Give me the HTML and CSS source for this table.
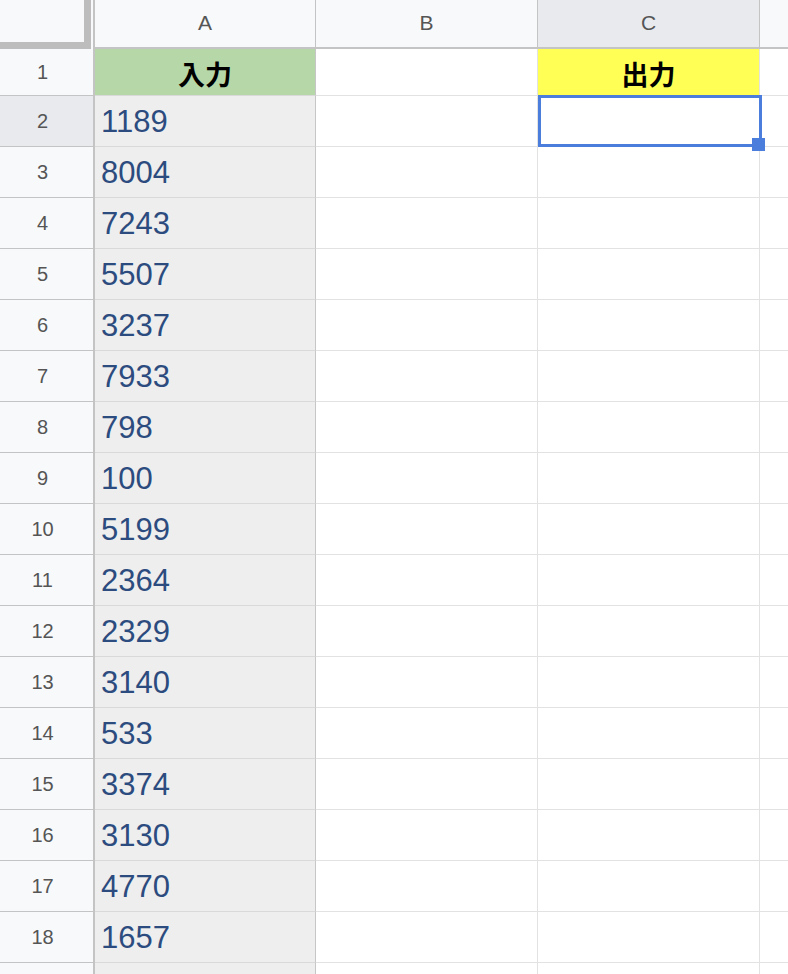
FILE: index.html
```html
<!DOCTYPE html>
<html lang="ja">
<head>
<meta charset="utf-8">
<link rel="stylesheet" href="styles.css">
</head>
<body>
<div class="sheet">
  <div class="corner"><div class="corner-bars"></div></div>
  <div class="colhead">A</div>
  <div class="colhead">B</div>
  <div class="colhead sel">C</div>
  <div class="colhead last"></div>

  <div class="rowhead r1">1</div>
  <div class="cell a r1 hdr-green">入力</div>
  <div class="cell r1"></div>
  <div class="cell r1 hdr-yellow">出力</div>
  <div class="cell r1 last"></div>

  <div class="rowhead sel">2</div>
  <div class="cell a num">1189</div>
  <div class="cell"></div>
  <div class="cell active"><div class="selbox"><div class="handle"></div></div></div>
  <div class="cell last"></div>

  <div class="rowhead">3</div><div class="cell a num">8004</div><div class="cell"></div><div class="cell"></div><div class="cell last"></div>
  <div class="rowhead">4</div><div class="cell a num">7243</div><div class="cell"></div><div class="cell"></div><div class="cell last"></div>
  <div class="rowhead">5</div><div class="cell a num">5507</div><div class="cell"></div><div class="cell"></div><div class="cell last"></div>
  <div class="rowhead">6</div><div class="cell a num">3237</div><div class="cell"></div><div class="cell"></div><div class="cell last"></div>
  <div class="rowhead">7</div><div class="cell a num">7933</div><div class="cell"></div><div class="cell"></div><div class="cell last"></div>
  <div class="rowhead">8</div><div class="cell a num">798</div><div class="cell"></div><div class="cell"></div><div class="cell last"></div>
  <div class="rowhead">9</div><div class="cell a num">100</div><div class="cell"></div><div class="cell"></div><div class="cell last"></div>
  <div class="rowhead">10</div><div class="cell a num">5199</div><div class="cell"></div><div class="cell"></div><div class="cell last"></div>
  <div class="rowhead">11</div><div class="cell a num">2364</div><div class="cell"></div><div class="cell"></div><div class="cell last"></div>
  <div class="rowhead">12</div><div class="cell a num">2329</div><div class="cell"></div><div class="cell"></div><div class="cell last"></div>
  <div class="rowhead">13</div><div class="cell a num">3140</div><div class="cell"></div><div class="cell"></div><div class="cell last"></div>
  <div class="rowhead">14</div><div class="cell a num">533</div><div class="cell"></div><div class="cell"></div><div class="cell last"></div>
  <div class="rowhead">15</div><div class="cell a num">3374</div><div class="cell"></div><div class="cell"></div><div class="cell last"></div>
  <div class="rowhead">16</div><div class="cell a num">3130</div><div class="cell"></div><div class="cell"></div><div class="cell last"></div>
  <div class="rowhead">17</div><div class="cell a num">4770</div><div class="cell"></div><div class="cell"></div><div class="cell last"></div>
  <div class="rowhead">18</div><div class="cell a num">1657</div><div class="cell"></div><div class="cell"></div><div class="cell last"></div>
  <div class="rowhead"></div><div class="cell a num"></div><div class="cell"></div><div class="cell"></div><div class="cell last"></div>
</div>
</body>
</html>
```

FILE: styles.css
```css
html, body {
  margin: 0;
  padding: 0;
  background: #ffffff;
  overflow: hidden;
}

.sheet {
  display: grid;
  grid-template-columns: 95px 221px 222px 222px 1fr;
  grid-template-rows: 49px 47px repeat(18, 51px);
  width: 788px;
  height: 974px;
  overflow: hidden;
  font-family: "Liberation Sans", Arial, sans-serif;
}

.corner {
  box-sizing: border-box;
  background: #f8f9fa;
  padding-right: 2px;
  border-right: 2px solid #c4c4c4;
}

.corner-bars {
  box-sizing: border-box;
  width: 91px;
  height: 49px;
  border-right: 7px solid #bdbdbd;
  border-bottom: 7px solid #bdbdbd;
}

.colhead {
  box-sizing: border-box;
  background: #f8f9fa;
  border-right: 1px solid #c4c4c4;
  border-bottom: 2px solid #c4c4c4;
  color: #555555;
  font-size: 21px;
  display: flex;
  align-items: center;
  justify-content: center;
  padding-bottom: 2px;
}

.colhead.sel {
  background: #e8eaed;
}

.colhead.last {
  border-right: none;
}

.rowhead {
  box-sizing: border-box;
  background: #f8f9fa;
  border-right: 2px solid #c4c4c4;
  border-bottom: 1px solid #c4c4c4;
  color: #555555;
  font-size: 20px;
  display: flex;
  align-items: center;
  justify-content: center;
  padding-right: 8px;
}

.rowhead.sel {
  background: #e8eaed;
}

.cell {
  box-sizing: border-box;
  background: #ffffff;
  border-right: 1px solid #e2e2e2;
  border-bottom: 1px solid #e2e2e2;
  display: flex;
  align-items: center;
}

.cell.last {
  border-right: none;
}

.cell.a {
  background: #eeeeee;
  border-right: 1px solid #c6c6c6;
  border-bottom: 1px solid #d9d9d9;
}

.num {
  color: #2c4b7e;
  font-size: 31px;
  padding-left: 6px;
  padding-top: 2px;
}

.hdr-green,
.hdr-yellow {
  justify-content: center;
  font-family: "Noto Sans CJK JP", "Noto Sans", sans-serif;
  font-weight: 700;
  font-size: 27px;
  color: #000000;
  padding-top: 2px;
}

.cell.hdr-green {
  background: #b6d7a8;
  border-bottom: 1px solid #d9d9d9;
}

.cell.hdr-yellow {
  background: #ffff55;
}

.active {
  position: relative;
}

.selbox {
  position: absolute;
  left: 0;
  top: -1px;
  width: 224px;
  height: 52px;
  box-sizing: border-box;
  border: 3px solid #4a7ddc;
}

.handle {
  position: absolute;
  left: 211px;
  top: 40px;
  width: 13px;
  height: 13px;
  background: #4a7ddc;
}
```
